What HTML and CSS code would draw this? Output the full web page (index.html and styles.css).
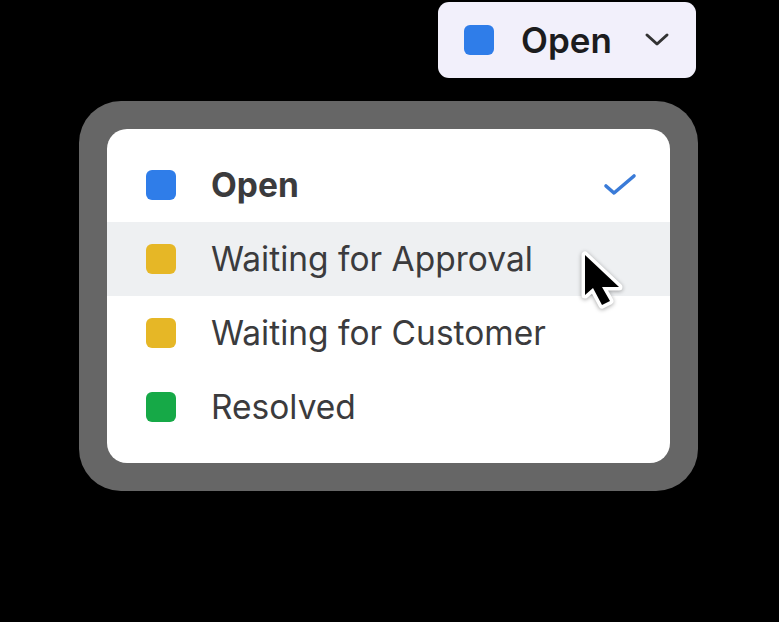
FILE: index.html
```html
<!DOCTYPE html>
<html lang="en">
<head>
    <meta charset="UTF-8">
    <meta name="viewport" content="width=device-width, initial-scale=1.0">
    <title>Status picker</title>
    <link rel="stylesheet" href="styles.css">
</head>
<body>

<div class="stage">
  <div class="top-row">
    <button class="status-button">
      <span class="dot dot-blue"></span>
      <span class="status-label">Open</span>
      <svg class="chevron" width="26" height="16" viewBox="0 0 26 16">
        <path d="M3 3 L13 12 L23 3" fill="none" stroke="#333" stroke-width="3" stroke-linecap="round" stroke-linejoin="round"/>
      </svg>
    </button>
  </div>

  <div class="frame">
    <ul class="menu">
      <li class="menu-item selected">
        <span class="dot dot-blue"></span>
        <span class="item-label">Open</span>
        <svg class="check" width="34" height="26" viewBox="0 0 34 26">
          <path d="M3 14 L11 21 L31 4" fill="none" stroke="#3a7bd8" stroke-width="3.6" stroke-linecap="round" stroke-linejoin="round"/>
        </svg>
      </li>
      <li class="menu-item hover">
        <span class="dot dot-yellow"></span>
        <span class="item-label">Waiting for Approval</span>
        <svg class="cursor" width="50" height="64" viewBox="0 0 50 64">
          <g transform="translate(5 5)">
            <path d="M0 0 L0 40 L8 33 L17 50 L25 46 L17 32 L34 32 Z" fill="#fff" stroke="#fff" stroke-width="7" stroke-linejoin="round"/>
            <path d="M0 0 L0 40 L8 33 L17 50 L25 46 L17 32 L34 32 Z" fill="#000"/>
          </g>
        </svg>
      </li>
      <li class="menu-item">
        <span class="dot dot-yellow"></span>
        <span class="item-label">Waiting for Customer</span>
      </li>
      <li class="menu-item">
        <span class="dot dot-green"></span>
        <span class="item-label">Resolved</span>
      </li>
    </ul>
  </div>
</div>

</body>
</html>
```

FILE: styles.css
```css
body {
  margin: 0;
  background: #000;
  font-family: 'Inter', 'Noto Sans', sans-serif;
}

.stage {
  width: 779px;
  height: 622px;
  padding-top: 2px;
  box-sizing: border-box;
}

.top-row {
  display: flex;
  justify-content: flex-end;
  padding-right: 83px;
}

.status-button {
  display: flex;
  align-items: center;
  width: 258px;
  height: 76px;
  padding: 0 26px;
  box-sizing: border-box;
  background: #f2f0fb;
  border: none;
  border-radius: 11px;
  font-family: inherit;
}

.status-button .status-label {
  margin-left: 27px;
  font-size: 35px;
  font-weight: 600;
  color: #1c1c1e;
}

.status-button .chevron {
  margin-left: auto;
}

.dot {
  display: inline-block;
  width: 30px;
  height: 30px;
  border-radius: 6px;
  flex-shrink: 0;
}

.dot-blue { background: #2f7de9; }
.dot-yellow { background: #e6b726; }
.dot-green { background: #16a947; }

.frame {
  width: 619px;
  height: 390px;
  margin: 23px 0 0 79px;
  padding: 28px;
  box-sizing: border-box;
  background: #666;
  border-radius: 42px;
}

.menu {
  list-style: none;
  margin: 0;
  padding: 19px 0;
  height: 100%;
  box-sizing: border-box;
  background: #fff;
  border-radius: 20px;
}

.menu-item {
  position: relative;
  display: flex;
  align-items: center;
  height: 74px;
  padding: 0 33px 0 39px;
}

.menu-item .item-label {
  margin-left: 35px;
  font-size: 33.5px;
  color: #3b3b3d;
}

.menu-item.selected .item-label {
  font-weight: 700;
}

.menu-item .check {
  margin-left: auto;
}

.menu-item.hover {
  background: #eef0f2;
}

.cursor {
  position: absolute;
  left: 473px;
  top: 28px;
  filter: drop-shadow(0 1px 2px rgba(0, 0, 0, 0.35));
}
```
